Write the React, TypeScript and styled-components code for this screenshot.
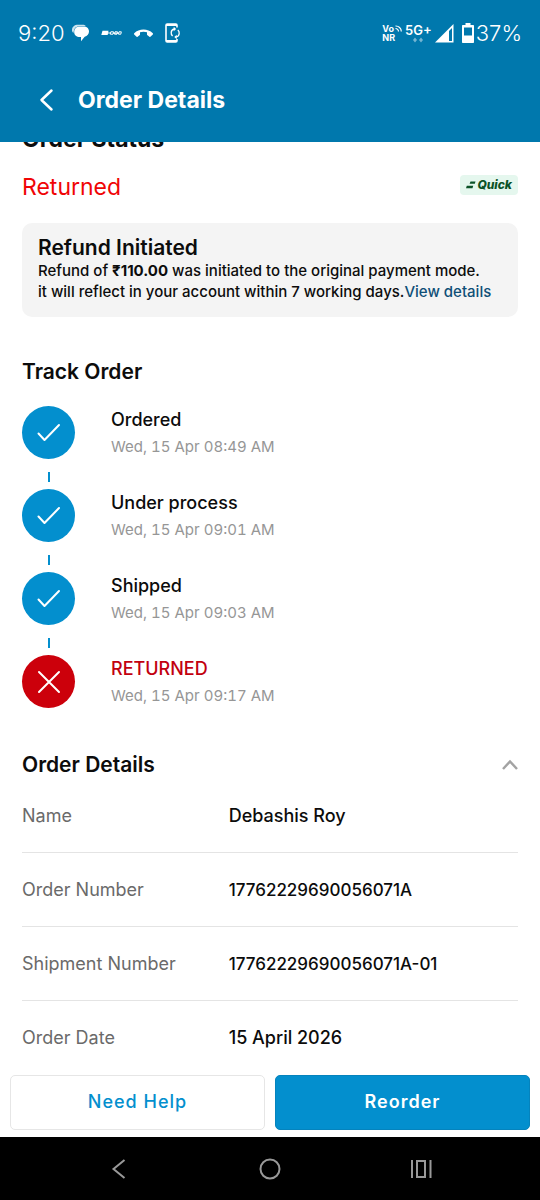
import React from "react";
import styled, { createGlobalStyle } from "styled-components";

const GlobalStyle = createGlobalStyle`
  *, *::before, *::after { box-sizing: border-box; }
  body { margin: 0; background: #fff; }
  h1, h2, h3, p, dl, dd, ol { margin: 0; padding: 0; }
  ol { list-style: none; }
  button { font: inherit; cursor: pointer; }
  svg { display: block; flex: none; }
`;

const Page = styled.div`
  display: flex;
  flex-direction: column;
  min-height: 100vh;
  font-family: Inter, "Liberation Sans", sans-serif;
  color: #0c0c0c;
`;

const TopBar = styled.header`
  position: sticky;
  top: 0;
  z-index: 2;
  background: #0078ad;
  color: #fff;
`;

const StatusBar = styled.div`
  display: flex;
  justify-content: space-between;
  align-items: center;
  height: 66px;
  padding: 0 18px;
  font-size: 22px;
  line-height: 28px;
  font-weight: 300;
`;

const StatusGroup = styled.div<{ $gap: number }>`
  display: flex;
  align-items: center;
  gap: ${(p) => p.$gap}px;
`;

const Network = styled.div`
  display: flex;
  flex-direction: column;
  font-size: 9px;
  line-height: 9px;
  font-weight: 700;
`;

const VoLine = styled.span`
  display: flex;
  align-items: center;
  gap: 1px;
`;

const Signal = styled(Network)`
  align-items: center;
  font-size: 13px;
  line-height: 13px;
  font-weight: 600;
`;

const TitleBar = styled.div`
  display: flex;
  align-items: center;
  gap: 20px;
  height: 76px;
  padding: 0 34px 8px;
`;

const IconButton = styled.button`
  display: flex;
  align-items: center;
  justify-content: center;
  padding: 0;
  border: 0;
  background: none;
  color: inherit;
`;

const PageTitle = styled.h1`
  font-size: 23px;
  line-height: 28px;
  font-weight: 700;
`;

const Content = styled.main`
  flex: 1;
  padding: 0 22px;
`;

const Heading = styled.h2<{ $large?: boolean }>`
  font-size: ${(p) => (p.$large ? 23 : 21)}px;
  line-height: 24px;
  font-weight: ${(p) => (p.$large ? 700 : 600)};
`;

const StatusSection = styled.section`
  margin-top: -15px;
`;

const StatusRow = styled.div`
  display: flex;
  align-items: center;
  justify-content: space-between;
  margin: 22px 0;
`;

const StatusText = styled.p`
  font-size: 23px;
  line-height: 28px;
  color: #f00505;
`;

const QuickTag = styled.span`
  display: flex;
  align-items: center;
  gap: 1px;
  margin-bottom: 4px;
  padding: 2px 6px;
  border-radius: 4px;
  background: #e5f7ee;
  color: #0b5226;
  font-size: 12px;
  line-height: 16px;
  font-weight: 800;
  font-style: italic;
`;

const RefundCard = styled.div`
  padding: 13px 16px 15px;
  border-radius: 10px;
  background: #f4f4f4;
  font-size: 15px;
  line-height: 21px;
  font-weight: 500;
`;

const CardTitle = styled.h3`
  font-size: 21px;
  line-height: 24px;
  font-weight: 600;
`;

const DetailsLink = styled.a`
  color: #0f4f77;
  text-decoration: none;
`;

const TrackSection = styled.section`
  margin-top: 43px;
`;

const Steps = styled.ol`
  margin-top: 22px;
`;

const Step = styled.li`
  display: flex;
  gap: 36px;
`;

const Rail = styled.div`
  display: flex;
  flex-direction: column;
  align-items: center;
`;

const Bullet = styled.span<{ $failed?: boolean }>`
  display: flex;
  align-items: center;
  justify-content: center;
  width: 53px;
  height: 53px;
  border-radius: 50%;
  background: ${(p) => (p.$failed ? "#cc000b" : "#038fce")};
`;

const Connector = styled.span`
  width: 2px;
  height: 10px;
  margin: 13px 0 7px;
  background: #038fce;
`;

const StepText = styled.div`
  display: flex;
  flex-direction: column;
  gap: 3px;
  padding-top: 2px;
`;

const StepName = styled.p<{ $failed?: boolean }>`
  font-size: 18px;
  line-height: 24px;
  font-weight: 500;
  color: ${(p) => (p.$failed ? "#c2000f" : "inherit")};
`;

const StepTime = styled.p`
  font-size: 15px;
  line-height: 24px;
  font-variant-numeric: tabular-nums;
  color: #969696;
`;

const DetailsSection = styled.section`
  margin-top: 45px;
`;

const DetailsHead = styled.div`
  display: flex;
  align-items: center;
  justify-content: space-between;
  margin-bottom: 2px;
`;

const DetailRow = styled.div`
  display: grid;
  grid-template-columns: 5fr 7fr;
  align-items: center;
  height: 74px;
  font-size: 18px;
  line-height: 24px;
  &:not(:last-child) { border-bottom: 1px solid #e4e4e4; }
`;

const Label = styled.dt`
  color: #6a6a6a;
`;

const Value = styled.dd<{ $long?: boolean }>`
  font-size: ${(p) => (p.$long ? 17 : 18)}px;
  font-weight: 500;
`;

const BottomBar = styled.footer`
  position: sticky;
  bottom: 0;
  background: #fff;
`;

const Actions = styled.div`
  display: flex;
  gap: 10px;
  padding: 0 10px 7px;
`;

const ActionButton = styled.button<{ $primary?: boolean }>`
  flex: 1;
  height: 55px;
  padding: 0 0 2px;
  border: 1px solid ${(p) => (p.$primary ? "#0583bd" : "#e6e6e6")};
  border-radius: 5px;
  background: ${(p) => (p.$primary ? "#038fce" : "#fff")};
  color: ${(p) => (p.$primary ? "#fff" : "#038fce")};
  font-size: 18px;
  font-weight: ${(p) => (p.$primary ? 600 : 500)};
  letter-spacing: 1px;
`;

const SystemNav = styled.nav`
  display: flex;
  justify-content: center;
  gap: 127px;
  height: 63px;
  background: #000;
  color: #999;
`;

const steps = [
  { name: "Ordered", time: "Wed, 15 Apr 08:49 AM" },
  { name: "Under process", time: "Wed, 15 Apr 09:01 AM" },
  { name: "Shipped", time: "Wed, 15 Apr 09:03 AM" },
  { name: "RETURNED", time: "Wed, 15 Apr 09:17 AM", failed: true },
];

const details = [
  { label: "Name", value: "Debashis Roy" },
  { label: "Order Number", value: "17762229690056071A", long: true },
  { label: "Shipment Number", value: "17762229690056071A-01", long: true },
  { label: "Order Date", value: "15 April 2026" },
];

const ChatIcon = () => (
  <svg width="18" height="18" viewBox="0 0 18 18" fill="currentColor" aria-hidden="true">
    <path d="M0 6.2C0 2.800 2.600.8 6 .8h4.500c1.400 0 2.600.5 3.300 1.200H8.500C4.500 2 1.800 4 1.600 8.800.6 8.300 0 7.500 0 6.200Z" opacity=".8" />
    <path d="M2.200 8C2.200 4.700 4.600 2.600 7.800 2.600h3.800c3.200 0 5.400 2 5.400 4.900 0 2.600-1.700 4.500-4.300 5.300L9 17.200v-4.100H7.800C4.600 13.100 2.200 11.200 2.200 8Z" />
  </svg>
);

const BadgeIcon = () => (
  <svg width="21" height="6" viewBox="0 0 21 6" aria-hidden="true">
    <path d="M1.500.8h6l-.8 4.200H.3Z" fill="currentColor" />
    <path d="M7 3h2.500M9.800 1.800h2.700l-.5 2.400H9.300ZM14 1.800h2.500L16 4.200h-2.500ZM18 1.800h2.300l-.5 2.400h-2.300ZM12 3.200h6" fill="none" stroke="currentColor" strokeWidth="1" />
  </svg>
);

const CallIcon = () => (
  <svg width="21" height="9" viewBox="0 0 20 9" fill="currentColor" aria-hidden="true">
    <path d="M10 .5c3.500 0 6.800 1.300 9.300 3.700.4.400.4.900 0 1.300l-2.100 2.100c-.4.400-.9.400-1.300.1l-1.900-1.400c-.3-.2-.5-.5-.5-.9V3.200a11.500 11.500 0 0 0-7 0v2.200c0 .4-.2.700-.5.900L4.100 7.700c-.4.300-.9.300-1.300-.1L.7 5.500c-.4-.4-.4-.9 0-1.300C3.200 1.800 6.500.5 10 .5Z" />
  </svg>
);

const PhoneSyncIcon = () => (
  <svg width="16" height="20" viewBox="0 0 16 20" fill="none" stroke="currentColor" aria-hidden="true">
    <path d="M12 4.500V2.200C12 1.500 11.500 1 10.800 1H2.200C1.500 1 1 1.500 1 2.200v15.600c0 .7.500 1.200 1.200 1.200h8.600c.7 0 1.200-.5 1.200-1.200V16" strokeWidth="1.600" />
    <path d="M1 2h11M1 18h11" strokeWidth="2.200" />
    <path d="M7.600 13A4 4 0 0 1 6.200 9.500 3.800 3.800 0 0 1 9.200 6M12.800 7A4 4 0 0 1 14.200 10.500 3.800 3.800 0 0 1 11.200 14" strokeWidth="1.300" />
    <path d="M8.700 3.800l2.400 2.200-2.400 2.200ZM11.700 11.800l-2.400 2.200 2.400 2.200Z" fill="currentColor" stroke="none" />
  </svg>
);

const WaveIcon = () => (
  <svg width="7" height="7" viewBox="0 0 7 7" fill="none" stroke="currentColor" aria-hidden="true">
    <path d="M.5 1A5.500 5.500 0 0 1 6.300 6.500M.5 3.500A3 3 0 0 1 3.500 6.500" strokeWidth="1.200" />
  </svg>
);

const DataIcon = () => (
  <svg width="12" height="6" viewBox="0 0 12 6" fill="currentColor" opacity=".45" aria-hidden="true">
    <path d="M3 .5l2 2.500-2 2.500L1 3ZM9 .5l2 2.500-2 2.500L7 3Z" />
  </svg>
);

const SignalIcon = () => (
  <svg width="19" height="19" viewBox="0 0 19 19" aria-hidden="true">
    <path d="M18.500 0v18.500H0Z" fill="currentColor" />
    <path d="M14 7l3-3v13h-3Z" fill="#0078ad" />
  </svg>
);

const BatteryIcon = () => (
  <svg width="12" height="20" viewBox="0 0 12 20" aria-hidden="true">
    <path d="M3.500 0h5v2H11c.6 0 1 .4 1 1v16c0 .6-.4 1-1 1H1c-.6 0-1-.4-1-1V3c0-.6.4-1 1-1h2.500Z" fill="currentColor" />
    <path d="M2 4.500h8v8H2Z" fill="#0078ad" />
  </svg>
);

const QuickMark = () => (
  <svg width="10" height="8" viewBox="0 0 10 8" fill="currentColor" aria-hidden="true">
    <path d="M4.500.5H9.500L8.800 2.800H3.600ZM.8 4.800h6.400L6.500 7.200H0Z" />
  </svg>
);

export default function App() {
  return (
    <Page>
      <GlobalStyle />
      <TopBar>
        <StatusBar>
          <StatusGroup $gap={11}>
            <StatusGroup $gap={7}>
              <span>9:20</span>
              <ChatIcon />
            </StatusGroup>
            <BadgeIcon />
            <CallIcon />
            <PhoneSyncIcon />
          </StatusGroup>
          <StatusGroup $gap={8}>
            <StatusGroup $gap={3}>
              <Network>
                <VoLine>Vo<WaveIcon /></VoLine>
                <span>NR</span>
              </Network>
              <Signal>
                <span>5G+</span>
                <DataIcon />
              </Signal>
              <SignalIcon />
            </StatusGroup>
            <StatusGroup $gap={2}>
              <BatteryIcon />
              <span>37%</span>
            </StatusGroup>
          </StatusGroup>
        </StatusBar>
        <TitleBar>
          <IconButton type="button" aria-label="Back">
            <svg width="24" height="24" viewBox="0 0 24 24" fill="none" stroke="currentColor" strokeWidth="2.500" strokeLinecap="round" strokeLinejoin="round">
              <path d="M17.500 2.500 7.500 12l10 9.500" />
            </svg>
          </IconButton>
          <PageTitle>Order Details</PageTitle>
        </TitleBar>
      </TopBar>

      <Content>
        <StatusSection>
          <Heading $large>Order Status</Heading>
          <StatusRow>
            <StatusText>Returned</StatusText>
            <QuickTag><QuickMark />Quick</QuickTag>
          </StatusRow>
          <RefundCard>
            <CardTitle>Refund Initiated</CardTitle>
            <p>
              Refund of <strong>₹110.00</strong> was initiated to the original payment mode.
              <br />
              it will reflect in your account within 7 working days.
              <DetailsLink href="#refund">View details</DetailsLink>
            </p>
          </RefundCard>
        </StatusSection>

        <TrackSection>
          <Heading>Track Order</Heading>
          <Steps>
            {steps.map((step, i) => (
              <Step key={step.name}>
                <Rail>
                  <Bullet $failed={step.failed}>
                    <svg width="26" height="26" viewBox="0 0 26 26" fill="none" stroke="#fff" strokeWidth="2" strokeLinecap="round" strokeLinejoin="round" aria-hidden="true">
                      <path d={step.failed ? "M3 3l20 20M23 3 3 23" : "M2.500 13.500 8.500 20 23 5"} />
                    </svg>
                  </Bullet>
                  {i < steps.length - 1 && <Connector />}
                </Rail>
                <StepText>
                  <StepName $failed={step.failed}>{step.name}</StepName>
                  <StepTime>{step.time}</StepTime>
                </StepText>
              </Step>
            ))}
          </Steps>
        </TrackSection>

        <DetailsSection>
          <DetailsHead>
            <Heading>Order Details</Heading>
            <IconButton type="button" aria-label="Collapse order details">
              <svg width="16" height="12" viewBox="0 0 16 12" fill="none" stroke="#a3a3a3" strokeWidth="2.500">
                <path d="M1 10l7-7.500L15 10" />
              </svg>
            </IconButton>
          </DetailsHead>
          <dl>
            {details.map((item) => (
              <DetailRow key={item.label}>
                <Label>{item.label}</Label>
                <Value $long={item.long}>{item.value}</Value>
              </DetailRow>
            ))}
          </dl>
        </DetailsSection>
      </Content>

      <BottomBar>
        <Actions>
          <ActionButton type="button">Need Help</ActionButton>
          <ActionButton type="button" $primary>Reorder</ActionButton>
        </Actions>
        <SystemNav aria-label="System">
          <IconButton type="button" aria-label="System back">
            <svg width="24" height="24" viewBox="0 0 24 24" fill="none" stroke="currentColor" strokeWidth="2">
              <path d="M17.500 3 6.500 12l11 9" />
            </svg>
          </IconButton>
          <IconButton type="button" aria-label="Home">
            <svg width="24" height="24" viewBox="0 0 24 24" fill="none" stroke="currentColor" strokeWidth="2">
              <circle cx="12" cy="12" r="9.500" />
            </svg>
          </IconButton>
          <IconButton type="button" aria-label="Recent apps">
            <svg width="24" height="24" viewBox="0 0 24 24" fill="none" stroke="currentColor" strokeWidth="2">
              <path d="M3 3v18M21.500 3v18M8 4h8v16H8Z" />
            </svg>
          </IconButton>
        </SystemNav>
      </BottomBar>
    </Page>
  );
}
